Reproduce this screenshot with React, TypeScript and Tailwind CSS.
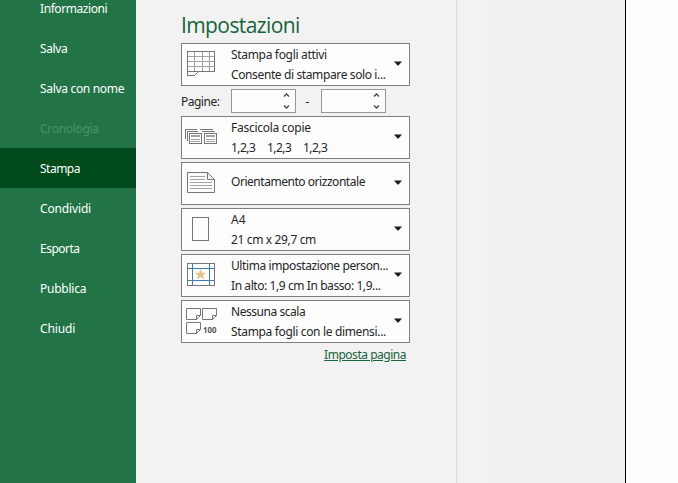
import React from "react";

const ink = "#767676";

function SheetIcon() {
  return (
    <svg width="48" height="41" fill="none" stroke="#a3a3a3" shapeRendering="crispEdges">
      <path d="M12.5 7.5V27M20.5 7.5V27M27.5 7.5V27M5.5 12.5H33M5.5 17.5H33M5.5 22.5H33" />
      <path d="M5.5 31.5V7.5H32.5V27.5H16" stroke={ink} />
      <path d="M5.5 27.5H16.5L12.5 31.5H5.5" stroke={ink} shapeRendering="auto" />
    </svg>
  );
}

function CollateIcon() {
  return (
    <svg width="48" height="41" fill="none" stroke={ink} shapeRendering="crispEdges">
      <path d="M3.5 22V12.5H14.5M5.5 24V14.5H16M18 12.5H31M20 14.5H33" />
      <rect x="7.5" y="16.5" width="12" height="10" fill="#fff" />
      <rect x="22.5" y="16.5" width="12" height="10" fill="#fff" />
      <path d="M9 22.5H18M9 24.5H18M24 22.5H33M24 24.5H33" stroke="#a3a3a3" />
      <path d="M9 19H18M24 19H33" stroke="#a3a3a3" strokeWidth="2" />
    </svg>
  );
}

function LandscapeIcon() {
  return (
    <svg width="48" height="41" fill="none" stroke={ink}>
      <path d="M5.5 9.5H25.5L32.5 16.5V29.5H5.5Z" />
      <path d="M25.5 9.5V16.5H32.5" />
      <path d="M8 13.5H23M8 16.5H23M8 19.5H30M8 22.5H30M8 25.5H30" stroke="#a3a3a3" />
    </svg>
  );
}

function PaperIcon() {
  return (
    <svg width="48" height="41" fill="none" stroke={ink}>
      <rect x="10.5" y="8.5" width="16" height="23" />
    </svg>
  );
}

function MarginsIcon() {
  return (
    <svg width="48" height="41" fill="none" stroke={ink}>
      <path d="M10.5 9V30M27.5 9V30M6 13.5H32M6 25.5H32" stroke="#3e7ab5" />
      <rect x="5.5" y="8.5" width="27" height="22" />
      <path d="M18.5 14.5L19.9 18.1H23.5L20.7 20.4L21.8 24L18.5 21.8L15.2 24L16.3 20.4L13.5 18.1H17.1Z" fill="#e5c288" stroke="#e5c288" strokeWidth="0.5" />
    </svg>
  );
}

function ScaleIcon() {
  return (
    <svg width="48" height="41" fill="none" stroke={ink}>
      <path d="M4.5 7.5H18.5V14.5L14.5 18.5H4.5ZM18.5 14.5H14.5V18.5" />
      <path d="M20.5 7.5H34.5V14.5L30.5 18.5H20.5ZM34.5 14.5H30.5V18.5" />
      <path d="M4.5 21.5H18.5V28.5L14.5 32.5H4.5ZM18.5 28.5H14.5V32.5" />
      <text x="21" y="32.3" fontSize="8.3" fontWeight="700" fill="#555" stroke="none" textLength="13.5" lengthAdjust="spacingAndGlyphs">100</text>
    </svg>
  );
}

function Option({ icon, children }: { icon: React.ReactNode; children: React.ReactNode }) {
  return (
    <div className="flex h-[43px] w-[229px] items-center border border-[#808080] bg-[#fdfdfd]">
      <div className="w-[49px] shrink-0">{icon}</div>
      <div className="flex w-[163px] shrink-0 flex-col whitespace-pre pt-px leading-5">{children}</div>
      <svg width="8" height="5" className="mb-0.5 shrink-0" fill="#1b1b1b">
        <path d="M0 0.5H8L4.5 4.5H3.5Z" />
      </svg>
    </div>
  );
}

function Spinner() {
  return (
    <div className="flex h-6 w-[65px] items-center justify-end border border-[#979797] bg-[#fdfdfd] pr-[5px]">
      <svg width="7" height="18" fill="none" stroke="#444" strokeWidth="1.3">
        <path d="M1 4.5L3.5 2L6 4.5M1 13.5L3.5 16L6 13.5" />
      </svg>
    </div>
  );
}

const nav = [
  { label: "Informazioni", style: "tracking-[-0.42px]" },
  { label: "Salva", style: "tracking-[-0.35px]" },
  { label: "Salva con nome", style: "tracking-[-0.32px]" },
  { label: "Cronologia", style: "tracking-[-0.3px] text-[#4f9069]" },
  { label: "Stampa", style: "tracking-[-0.5px] bg-[#004b1c]" },
  { label: "Condividi", style: "tracking-[-0.15px]" },
  { label: "Esporta", style: "tracking-[-0.5px]" },
  { label: "Pubblica", style: "tracking-[-0.25px]" },
  { label: "Chiudi", style: "tracking-[-0.15px]" },
];

export default function App() {
  return (
    <div className="flex h-[483px] w-[678px] overflow-hidden bg-[#f2f2f2] font-['Noto_Sans','Open_Sans',sans-serif] text-xs text-[#262626]">
      <nav className="-mt-3 w-[136px] shrink-0 bg-[#227447] text-white">
        {nav.map((item) => (
          <div key={item.label} className={"flex h-10 items-center whitespace-nowrap pl-10 pt-0.5 " + item.style}>
            {item.label}
          </div>
        ))}
      </nav>
      <main className="w-[320px] shrink-0 pl-[45px]">
        <h1 className="h-[43px] pt-[9px] font-['Open_Sans','Noto_Sans',sans-serif] text-[21px] leading-8 tracking-[-0.6px] text-[#17633a]">
          Impostazioni
        </h1>
        <Option icon={<SheetIcon />}>
          <span className="tracking-[-0.32px]">Stampa fogli attivi</span>
          <span className="tracking-[-0.38px]">Consente di stampare solo i...</span>
        </Option>
        <div className="flex h-[30px] items-center">
          <span className="w-[50px] pt-0.5 tracking-[-0.5px]">Pagine:</span>
          <Spinner />
          <span className="w-[25px] pt-0.5 pr-0.5 text-center">-</span>
          <Spinner />
        </div>
        <div className="flex flex-col gap-[3px]">
          <Option icon={<CollateIcon />}>
            <span className="tracking-[-0.27px]">Fascicola copie</span>
            <span className="flex tracking-[-0.55px]">
              <span className="w-9">1,2,3</span>
              <span className="w-9">1,2,3</span>
              <span>1,2,3</span>
            </span>
          </Option>
          <Option icon={<LandscapeIcon />}>
            <span className="pb-1 tracking-[-0.46px]">Orientamento orizzontale</span>
          </Option>
          <Option icon={<PaperIcon />}>
            <span>A4</span>
            <span className="tracking-[-0.36px]">21 cm x 29,7 cm</span>
          </Option>
          <Option icon={<MarginsIcon />}>
            <span className="tracking-[-0.4px]">Ultima impostazione person...</span>
            <span className="tracking-[-0.42px]">In alto: 1,9 cm In basso: 1,9...</span>
          </Option>
          <Option icon={<ScaleIcon />}>
            <span className="tracking-[-0.46px]">Nessuna scala</span>
            <span className="tracking-[-0.34px]">Stampa fogli con le dimensi...</span>
          </Option>
        </div>
        <div className="flex w-[225px] justify-end pt-1 tracking-[-0.48px] text-[#17633a]">
          <a className="underline">Imposta pagina</a>
        </div>
      </main>
      <section className="w-8 shrink-0 border-l border-[#dcdcdc] bg-[#f2f2f2]" />
      <section className="w-[137px] shrink-0 bg-[#f0f0f0]" />
      <section className="grow border-l border-black bg-[#fdfdfd]" />
    </div>
  );
}
